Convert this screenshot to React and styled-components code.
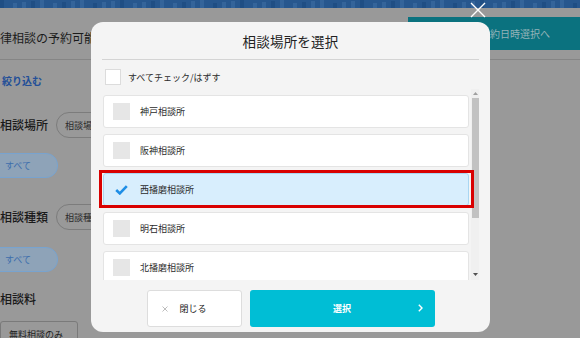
import React from "react";
import styled, { createGlobalStyle } from "styled-components";

const Global = createGlobalStyle`
  html, body { margin: 0; padding: 0; }
  body { font-family: "Noto Sans CJK JP", "Noto Sans", sans-serif; }
  * { box-sizing: border-box; }
`;

const Page = styled.div`
  position: relative;
  width: 580px;
  height: 338px;
  overflow: hidden;
  background: #999999;
  display: flex;
  flex-direction: column;
`;

const TopBar = styled.div`
  height: 8px;
  flex: none;
  background: #27578e;
  display: flex;
`;

const HeaderRow = styled.div`
  height: 51px;
  flex: none;
  display: flex;
  align-items: flex-start;
  justify-content: space-between;
`;

const PageTitle = styled.div`
  margin: 22px 0 0 -12px;
  font-size: 12px;
  line-height: 16px;
  color: #1b1b1b;
  white-space: nowrap;
`;

const NextButton = styled.div`
  margin-top: 9px;
  width: 172px;
  height: 33px;
  background: #0b727f;
  color: #93b3b8;
  font-size: 10px;
  display: flex;
  align-items: center;
  padding-left: 72px;
  white-space: nowrap;
`;

const Divider = styled.div`
  height: 1px;
  background: ${(p) => p.$color || "#858585"};
  flex: none;
`;

const Side = styled.div`
  flex: none;
  display: flex;
  flex-direction: column;
  align-items: flex-start;
`;

const FilterLink = styled.div`
  margin-top: 14px;
  margin-left: 2px;
  font-size: 10px;
  line-height: 14px;
  font-weight: 700;
  color: #234f98;
`;

const FilterRow = styled.div`
  margin-top: ${(p) => p.$mt}px;
  display: flex;
  align-items: center;
  gap: 8px;
`;

const Label = styled.div`
  font-size: 12px;
  line-height: 16px;
  color: #1a1a1a;
  font-weight: 500;
  white-space: nowrap;
`;

const OutlinePill = styled.div`
  height: 26px;
  padding: 0 8px;
  border: 1px solid #7c7c7c;
  border-radius: 13px;
  font-size: 9px;
  color: #2a2a2a;
  display: flex;
  align-items: center;
  white-space: nowrap;
`;

const AllPill = styled.div`
  margin-top: ${(p) => p.$mt}px;
  margin-left: -20px;
  width: 78px;
  height: 25px;
  border-radius: 12px;
  border: 1px solid #78a3cf;
  background: #8ea3b8;
  color: #3d6eac;
  font-size: 9px;
  display: flex;
  align-items: center;
  padding-left: 24px;
`;

const FeeLabel = styled(Label)`
  margin-top: 19px;
`;

const FreeBox = styled.div`
  margin-top: 14px;
  width: 78px;
  height: 24px;
  border: 1px solid #7a7a7a;
  border-radius: 3px;
  font-size: 9px;
  color: #1e1e1e;
  padding: 6px 0 0 8px;
  white-space: nowrap;
`;

/* Modal */
const Overlay = styled.div`
  position: absolute;
  inset: 0;
  display: flex;
  justify-content: center;
  padding: 22px 0 0 1px;
`;

const CloseX = styled.svg`
  position: absolute;
  left: 470px;
  top: 2px;
`;

const Modal = styled.div`
  width: 399px;
  height: 310px;
  background: #f4f4f4;
  border-radius: 12px;
  padding: 0 11px 5px 11px;
  display: flex;
  flex-direction: column;
`;

const ModalTitle = styled.div`
  height: 37px;
  display: flex;
  align-items: center;
  justify-content: center;
  font-size: 13.5px;
  color: #222;
  letter-spacing: 0.2px;
`;

const CheckAllRow = styled.div`
  margin-top: 9px;
  padding-left: 3px;
  display: flex;
  align-items: center;
  gap: 7px;
  height: 16px;
`;

const WhiteBox = styled.div`
  width: 16px;
  height: 16px;
  background: #fff;
  border: 1px solid #dcdcdc;
`;

const SmallText = styled.span`
  font-size: 9px;
  color: #2b2b2b;
  white-space: nowrap;
`;

const ListFrame = styled.div`
  margin: 4px 0 0 -4px;
  height: 191px;
  overflow: hidden;
  display: flex;
  flex: none;
`;

const List = styled.div`
  flex: 1;
  padding: 6px 2px 0 5px;
  display: flex;
  flex-direction: column;
  gap: 6px;
`;

const Item = styled.div`
  position: relative;
  height: 33px;
  flex: none;
  border-radius: 3px;
  border: 1px solid ${(p) => (p.$selected ? "#a9d6f2" : "#e4e4e4")};
  background: ${(p) => (p.$selected ? "#d8eefd" : "#ffffff")};
  display: flex;
  align-items: center;
  padding-left: 9px;
  gap: 10px;
`;

const GrayBox = styled.div`
  width: 17px;
  height: 17px;
  background: ${(p) => (p.$checked ? "transparent" : "#e6e6e6")};
  display: flex;
  align-items: center;
  justify-content: center;
`;

const Highlight = styled.div`
  position: absolute;
  top: -4px;
  bottom: -3px;
  left: -5px;
  right: -6px;
  border: 3px solid #d90000;
  z-index: 2;
  pointer-events: none;
`;

const Scrollbar = styled.div`
  width: 8px;
  background: #f0f0f0;
  display: flex;
  flex-direction: column;
  align-items: center;
  flex: none;
`;

const Arrow = styled.svg`
  flex: none;
  margin: ${(p) => p.$m};
`;

const Thumb = styled.div`
  width: 7px;
  height: 120px;
  background: #c2c2c2;
  margin-top: 3px;
`;

const ButtonRow = styled.div`
  margin-top: auto;
  display: flex;
  justify-content: center;
  gap: 8px;
`;

const CloseButton = styled.div`
  width: 95px;
  height: 37px;
  background: #fff;
  border: 1px solid #dddddd;
  border-radius: 3px;
  display: flex;
  align-items: center;
  padding-left: 14px;
  gap: 12px;
  font-size: 9px;
  color: #222;
`;

const SelectButton = styled.div`
  position: relative;
  width: 185px;
  height: 37px;
  background: #00bed5;
  border-radius: 3px;
  display: flex;
  align-items: center;
  justify-content: center;
  color: #fff;
  font-size: 9px;
  font-weight: 700;
`;

const Chevron = styled.svg`
  position: absolute;
  right: 12px;
  top: 14px;
`;

const CheckIcon = () => (
  <svg width="13" height="10" viewBox="0 0 13 10">
    <path d="M1.2 5 L4.8 8.4 L11.8 1.2" fill="none" stroke="#1e8ee6" strokeWidth="2.6" />
  </svg>
);

const Skyline = () => (
  <svg width="580" height="8" viewBox="0 0 580 8">
    {Array.from({ length: 58 }).map((_, i) => (
      <rect
        key={i}
        x={i * 10 + ((i * 7) % 4)}
        y={(i * 3) % 4}
        width={4 + ((i * 5) % 5)}
        height={8}
        fill={i % 3 === 0 ? "#1d4a80" : "#3a6aa0"}
        opacity="0.7"
      />
    ))}
  </svg>
);

const places = ["神戸相談所", "阪神相談所", "西播磨相談所", "明石相談所", "北播磨相談所"];

export default function App() {
  return (
    <>
      <Global />
      <Page>
        <TopBar>
          <Skyline />
        </TopBar>
        <HeaderRow>
          <PageTitle>法律相談の予約可能日</PageTitle>
          <NextButton>予約日時選択へ</NextButton>
        </HeaderRow>
        <Divider />
        <Side>
          <FilterLink>絞り込む</FilterLink>
          <FilterRow $mt={24}>
            <Label>相談場所</Label>
            <OutlinePill>相談場所</OutlinePill>
          </FilterRow>
          <AllPill $mt={15}>すべて</AllPill>
          <FilterRow $mt={26}>
            <Label>相談種類</Label>
            <OutlinePill>相談種類</OutlinePill>
          </FilterRow>
          <AllPill $mt={17}>すべて</AllPill>
          <FeeLabel>相談料</FeeLabel>
          <FreeBox>無料相談のみ</FreeBox>
        </Side>

        <Overlay>
          <Modal>
            <ModalTitle>相談場所を選択</ModalTitle>
            <Divider $color="#d4d4d4" />
            <CheckAllRow>
              <WhiteBox />
              <SmallText>すべてチェック/はずす</SmallText>
            </CheckAllRow>
            <ListFrame>
              <List>
                {places.map((p, i) => (
                  <Item key={p} $selected={i === 2}>
                    <GrayBox $checked={i === 2}>{i === 2 && <CheckIcon />}</GrayBox>
                    <SmallText>{p}</SmallText>
                    {i === 2 && <Highlight />}
                  </Item>
                ))}
              </List>
              <Scrollbar>
                <Arrow width="5" height="3" viewBox="0 0 5 3" $m="3px 0 0 0">
                  <path d="M0 3 L2.5 0 L5 3 Z" fill="#a0a0a0" />
                </Arrow>
                <Thumb />
                <Arrow width="5" height="3" viewBox="0 0 5 3" $m="auto 0 4px 0">
                  <path d="M0 0 L2.5 3 L5 0 Z" fill="#505050" />
                </Arrow>
              </Scrollbar>
            </ListFrame>
            <ButtonRow>
              <CloseButton>
                <svg width="6" height="6" viewBox="0 0 6 6">
                  <path d="M0.5 0.5 L5.5 5.5 M5.5 0.5 L0.5 5.5" stroke="#bdbdbd" strokeWidth="1" />
                </svg>
                閉じる
              </CloseButton>
              <SelectButton>
                選択
                <Chevron width="5" height="8" viewBox="0 0 5 8">
                  <path d="M0.8 0.8 L4 4 L0.8 7.2" fill="none" stroke="#fff" strokeWidth="1.4" />
                </Chevron>
              </SelectButton>
            </ButtonRow>
          </Modal>
        </Overlay>
        <CloseX width="16" height="16" viewBox="0 0 16 16">
          <path d="M1 1 L15 15 M15 1 L1 15" stroke="#fff" strokeWidth="1.4" />
        </CloseX>
      </Page>
    </>
  );
}
